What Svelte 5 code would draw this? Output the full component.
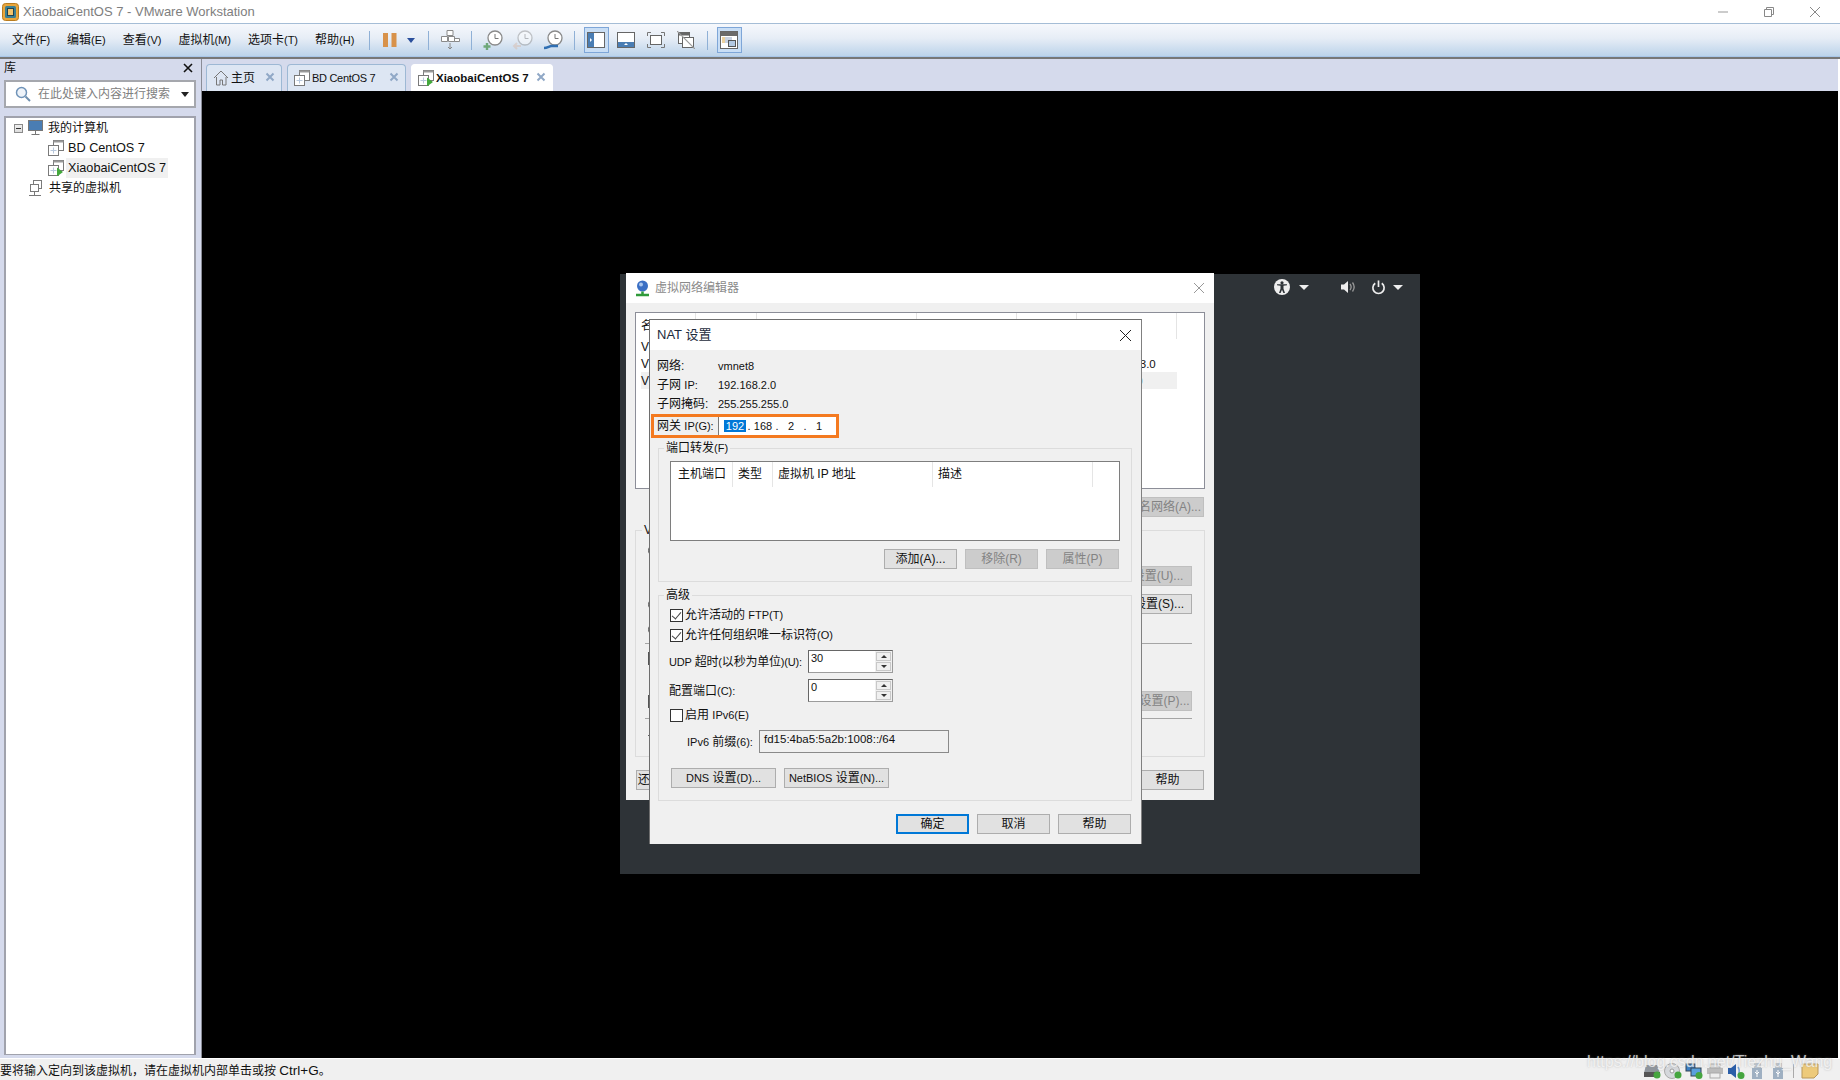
<script>
	const menus = [['文件', '(F)'], ['编辑', '(E)'], ['查看', '(V)'], ['虚拟机', '(M)'], ['选项卡', '(T)'], ['帮助', '(H)']];
	const columns = [
		{ label: '主机端口', width: 62 },
		{ label: '类型', width: 40 },
		{ label: '虚拟机 IP 地址', width: 160 },
		{ label: '描述', width: 160 }
	];
	const octets = ['192', '168', '2', '1'];
	const networks = [
		{ name: 'VMnet0', type: '桥接模式', subnet: '' },
		{ name: 'VMnet1', type: '仅主机', subnet: '192.168.3.0' },
		{ name: 'VMnet8', type: 'NAT 模式', subnet: '192.168.2.0' }
	];
</script>

{#snippet vmIcon(running)}
	<svg class="ico16" viewBox="0 0 16 16">
		<rect x="5.5" y="0.5" width="10" height="10" fill="#fff" stroke="#7a7a7a" />
		<rect x="5.5" y="0.5" width="10" height="2" fill="#9a9a9a" />
		<rect x="0.5" y="5.5" width="10" height="10" fill="#fff" stroke="#7a7a7a" />
		<path d="M5.5 7.5v6M2.5 10.5h6" stroke="#b8c8dc" fill="none" />
		{#if running}<path d="M9 7.5l6 4.5-6 4.5z" fill="#43a83c" />{/if}
	</svg>
{/snippet}

{#snippet clock(kind)}
	<svg class="ico22" viewBox="0 0 22 22" class:faded={kind === 'back'}>
		<circle cx="13" cy="9" r="7" fill="#fff" stroke="#8a8a8a" stroke-width="1.3" />
		<path d="M13 5v4.5h3.5" fill="none" stroke="#777" />
		{#if kind === 'add'}<path d="M5 14v7M1.5 17.5h7" stroke="#6fa87a" stroke-width="2.4" fill="none" />{/if}
		{#if kind === 'back'}<path d="M9 17H2m3-3l-3 3 3 3" stroke="#d9b9a6" stroke-width="2" fill="none" />{/if}
		{#if kind === 'tool'}<path d="M2 19c3 0 4-1 7-2h7" stroke="#2f6fb3" stroke-width="2.6" fill="none" />{/if}
	</svg>
{/snippet}

<div class="app">
	<header class="titlebar">
		<svg class="logo" viewBox="0 0 17 18">
			<rect x="0.5" y="0.5" width="16" height="17" rx="3" fill="#e9a63c" stroke="#b97c1f" />
			<rect x="3" y="3" width="11" height="12" rx="1.5" fill="#3b7f92" />
			<rect x="5.5" y="5.5" width="6" height="7" fill="#f3c36b" stroke="#20424f" />
		</svg>
		<span class="app-title">XiaobaiCentOS 7 - VMware Workstation</span>
		<div class="win-controls">
			<svg viewBox="0 0 12 12"><path d="M1 6h10" stroke="#999" stroke-width="1" /></svg>
			<svg viewBox="0 0 12 12"><path d="M1.5 3.5h7v7h-7zM3.5 3.5v-2h7v7h-2" fill="none" stroke="#888" /></svg>
			<svg viewBox="0 0 12 12"><path d="M1 1l10 10M11 1L1 11" stroke="#888" /></svg>
		</div>
	</header>

	<div class="toolbar">
		<nav class="menus">
			{#each menus as m}<span>{m[0]}<span class="lat">{m[1]}</span></span>{/each}
		</nav>
		<i class="sep"></i>
		<span class="slot pause"><svg viewBox="0 0 14 14" class="ico14"><path d="M0 0h5v14H0zM8.500 0h5v14h-5z" fill="#d8924a" /></svg></span>
		<span class="slot drop"><svg viewBox="0 0 8 5" class="ico8"><path d="M0 0h8L4 5z" fill="#2a4f9c" /></svg></span>
		<i class="sep"></i>
		<span class="slot">
			<svg class="ico22" viewBox="0 0 22 22"><path d="M8 1.500h6v5H8zM2.500 7.500h6v5h-6zM9.500 7.500h6v5h-6zM15.500 9.500h5v3h-5z" fill="#fff" stroke="#8a8a8a" /><path d="M11 14v6m-2-2l2 2 2-2" fill="none" stroke="#888" /></svg>
		</span>
		<i class="sep"></i>
		<span class="slot">{@render clock('add')}</span>
		<span class="slot">{@render clock('back')}</span>
		<span class="slot">{@render clock('tool')}</span>
		<i class="sep"></i>
		<span class="slot"><span class="on">
			<svg class="ico18" viewBox="0 0 18 16"><rect x="0.500" y="0.500" width="17" height="15" fill="#fff" stroke="#666" /><rect x="1" y="1" width="6" height="14" fill="#4a7db3" /><path d="M3 6l2 2-2 2z" fill="#fff" /></svg>
		</span></span>
		<span class="slot"><svg class="ico18" viewBox="0 0 18 16"><rect x="0.500" y="0.500" width="17" height="15" fill="#fff" stroke="#666" /><rect x="1" y="10" width="16" height="5" fill="#4a7db3" /><path d="M7 13l2-2 2 2z" fill="#fff" /></svg></span>
		<span class="slot"><svg class="ico18" viewBox="0 0 18 16"><rect x="3.500" y="3.500" width="11" height="9" fill="#fff" stroke="#666" /><path d="M0.500 4V0.500H4M14 0.500h3.500V4M0.500 12v3.500H4M14 15.500h3.500V12" fill="none" stroke="#777" /></svg></span>
		<span class="slot"><svg class="ico18" viewBox="0 0 18 18"><rect x="1.500" y="1.500" width="11" height="11" fill="#fff" stroke="#666" /><rect x="1.500" y="1.500" width="11" height="3" fill="#666" /><rect x="5.500" y="6.500" width="11" height="10" fill="#fff" stroke="#666" /><path d="M0 0l18 18" stroke="#999" stroke-width="1.200" /></svg></span>
		<i class="sep"></i>
		<span class="slot"><span class="on">
			<svg class="ico18" viewBox="0 0 18 18"><rect x="0.500" y="0.500" width="17" height="17" fill="#fff" stroke="#666" /><rect x="1" y="1" width="16" height="4" fill="#6a6a6a" /><rect x="5" y="6" width="7" height="6" fill="#c9d3e3" /><rect x="8.500" y="9.500" width="7" height="6" fill="#b3c9e2" stroke="#555" /><path d="M2 7h3M2 9h3M2 11h3" stroke="#d9a441" /></svg>
		</span></span>
	</div>

	<div class="main">
		<aside class="library">
			<div class="lib-head"><span>库</span><svg viewBox="0 0 10 10"><path d="M1 1l8 8M9 1L1 9" stroke="#111" stroke-width="1.600" /></svg></div>
			<div class="search">
				<svg viewBox="0 0 16 16"><circle cx="6.500" cy="6.500" r="5" fill="#eef3f9" stroke="#6f93b8" stroke-width="1.500" /><path d="M10.500 10.500l4.500 4.500" stroke="#6f8fae" stroke-width="2" /></svg>
				<span>在此处键入内容进行搜索</span>
				<i class="search-caret"></i>
			</div>
			<div class="tree">
				<div class="node">
					<span class="expander"></span>
					<svg class="ico16" viewBox="0 0 16 16"><rect x="0.500" y="0.500" width="14" height="10" fill="#4a7db3" stroke="#777" /><path d="M7.500 11v3M3.500 14.500h8" stroke="#777" fill="none" /></svg>
					<span>我的计算机</span>
				</div>
				<div class="node child">{@render vmIcon(false)}<span class="vm-name">BD CentOS 7</span></div>
				<div class="node child">{@render vmIcon(true)}<span class="vm-name current">XiaobaiCentOS 7</span></div>
				<div class="node shared">
					<svg class="ico16" viewBox="0 0 16 16"><rect x="4.500" y="0.500" width="8" height="8" fill="#fff" stroke="#7a7a7a" /><rect x="1.500" y="4.500" width="8" height="7" fill="#fff" stroke="#7a7a7a" /><path d="M5.500 12v3M0 15.500h12" stroke="#777" fill="none" /></svg>
					<span>共享的虚拟机</span>
				</div>
			</div>
		</aside>

		<section class="content">
			<div class="tabs">
				<div class="tab home">
					<svg class="ico16" viewBox="0 0 16 16"><path d="M1 8l7-7 7 7M3.500 7v8h3.500v-5h2.500v5H13V7" fill="none" stroke="#777" /></svg>
					<span>主页</span>
					<svg class="tab-x" viewBox="0 0 10 10"><path d="M1.500 1.500l7 7M8.500 1.500l-7 7" stroke="#90a8c6" stroke-width="2" /></svg>
				</div>
				<div class="tab bd">
					{@render vmIcon(false)}
					<span>BD CentOS 7</span>
					<svg class="tab-x" viewBox="0 0 10 10"><path d="M1.500 1.500l7 7M8.500 1.500l-7 7" stroke="#90a8c6" stroke-width="2" /></svg>
				</div>
				<div class="tab active">
					{@render vmIcon(true)}
					<span>XiaobaiCentOS 7</span>
					<svg class="tab-x" viewBox="0 0 10 10"><path d="M1.500 1.500l7 7M8.500 1.500l-7 7" stroke="#90a8c6" stroke-width="2" /></svg>
				</div>
			</div>

			<div class="vm-view">
				<div class="guest">
					<div class="guest-icons">
						<svg class="a11y" viewBox="0 0 16 16"><circle cx="8" cy="8" r="8" fill="#eee" /><circle cx="8" cy="3.800" r="1.600" fill="#2e3337" /><path d="M3 6.200l3.500.6v3L5 14h1.600L8 10.800 9.400 14H11L9.500 9.800v-3l3.500-.6v-1H3z" fill="#2e3337" /></svg>
						<i class="g-caret first"></i>
						<svg class="speaker" viewBox="0 0 16 14"><path d="M0 4.500h3L7 1v12L3 9.500H0z" fill="#eee" /><path d="M9 4c1.300 1.700 1.300 4.300 0 6M11.500 2.500c2 2.700 2 6.300 0 9" fill="none" stroke="#999" stroke-width="1.300" /></svg>
						<svg class="power" viewBox="0 0 16 16"><path d="M4.500 3.500a6 6 0 1 0 7 0" fill="none" stroke="#eee" stroke-width="1.800" /><path d="M8 0.500v7" stroke="#eee" stroke-width="1.800" /></svg>
						<i class="g-caret"></i>
					</div>

					<!-- 后面的虚拟网络编辑器窗口 -->
					<div class="dialog back">
						<div class="back-title">
							<svg viewBox="0 0 15 17"><circle cx="7.500" cy="6" r="5.500" fill="#3a6fc4" /><circle cx="6" cy="4.500" r="2" fill="#a9c6ee" /><path d="M7.500 11.500V14M1 15h13" stroke="#2f9a3a" stroke-width="2.500" /></svg>
							<span>虚拟网络编辑器</span>
							<svg class="back-x" viewBox="0 0 10 10"><path d="M0 0l10 10M10 0L0 10" stroke="#999" /></svg>
						</div>
						<div class="back-body">
							<div class="net-list">
								<div class="net-head">
									<span>名称</span><span>类型</span><span>外部连接</span><span>主机连接</span><span>DHCP</span><span>子网地址</span>
								</div>
								{#each networks as n, i}
									<div class="net-row" class:selected={i === 2}>
										<span>{n.name}</span><span>{n.type}</span><span></span><span></span><span></span><span>{n.subnet}</span>
									</div>
								{/each}
							</div>
							<div class="back-actions">
								<button class="btn off wide">重命名网络(A)...</button>
							</div>
							<fieldset class="net-info">
								<legend>VMnet 信息</legend>
								<div class="info-row"><i class="radio"></i>桥接模式</div>
								<div class="info-row end"><button class="btn off wide">自动设置(U)...</button></div>
								<div class="info-row"><i class="radio"></i><button class="btn wide push">NAT 设置(S)...</button></div>
								<div class="info-row"><i class="radio"></i>仅主机模式</div>
								<hr />
								<div class="info-row"><i class="square"></i>将主机虚拟适配器连接到此网络</div>
								<div class="info-row"></div>
								<div class="info-row"><i class="square"></i><button class="btn off wide push">DHCP 设置(P)...</button></div>
								<div class="rule-row"><hr /></div>
								<div class="info-row"><i class="dash"></i></div>
							</fieldset>
							<div class="back-foot">
								<button class="btn wide">还原默认设置(R)</button>
								<button class="btn">帮助</button>
							</div>
						</div>
					</div>

					<!-- NAT 设置 -->
					<div class="dialog nat">
						<div class="nat-title"><span>NAT 设置</span><svg viewBox="0 0 11 11"><path d="M0 0l11 11M11 0L0 11" stroke="#222" /></svg></div>
						<div class="nat-body">
							<dl class="facts">
								<dt>网络:</dt><dd>vmnet8</dd>
								<dt>子网 <span class="lat">IP:</span></dt><dd>192.168.2.0</dd>
								<dt>子网掩码:</dt><dd>255.255.255.0</dd>
							</dl>
							<div class="gateway">
								<span>网关 <span class="lat">IP(G):</span></span>
								<div class="ip">
									{#each octets as o, i}
										<span class="octet"><span class:sel={i === 0}>{o}</span></span>{#if i < 3}<span class="dot">.</span>{/if}
									{/each}
								</div>
							</div>

							<fieldset class="forward">
								<legend>端口转发<span class="lat">(F)</span></legend>
								<div class="ports">
									<div class="ports-head">
										{#each columns as c}
											<span class="col" style="width:{c.width}px">{c.label}</span>
										{/each}
									</div>
								</div>
								<div class="row-btns">
									<button class="btn">添加(A)...</button>
									<button class="btn off">移除(R)</button>
									<button class="btn off">属性(P)</button>
								</div>
							</fieldset>

							<fieldset class="advanced">
								<legend>高级</legend>
								<label class="check"><i class="box checked"></i><span>允许活动的 <span class="lat">FTP(T)</span></span></label>
								<label class="check"><i class="box checked"></i><span>允许任何组织唯一标识符<span class="lat">(O)</span></span></label>
								<div class="spin-row udp">
									<span><span class="lat">UDP</span> 超时<span class="lat">(</span>以秒为单位<span class="lat">)(U):</span></span>
									<div class="spin"><b>30</b><span class="arrows"><i class="up"></i><i class="down"></i></span></div>
								</div>
								<div class="spin-row port">
									<span>配置端口<span class="lat">(C):</span></span>
									<div class="spin"><b>0</b><span class="arrows"><i class="up"></i><i class="down"></i></span></div>
								</div>
								<label class="check v6"><i class="box"></i><span>启用 <span class="lat">IPv6(E)</span></span></label>
								<div class="prefix">
									<span><span class="lat">IPv6</span> 前缀<span class="lat">(6):</span></span>
									<div class="prefix-input">fd15:4ba5:5a2b:1008::/64</div>
								</div>
								<div class="svc-btns">
									<button class="btn svc"><span class="lat">DNS</span> 设置<span class="lat">(D)...</span></button>
									<button class="btn svc"><span class="lat">NetBIOS</span> 设置<span class="lat">(N)...</span></button>
								</div>
							</fieldset>

							<div class="foot">
								<button class="btn primary">确定</button>
								<button class="btn">取消</button>
								<button class="btn">帮助</button>
							</div>
						</div>
					</div>
				</div>
			</div>
		</section>
	</div>

	<footer class="statusbar">
		<span class="hint">要将输入定向到该虚拟机，请在虚拟机内部单击或按 <span class="ctrl">Ctrl+G</span>。</span>
		<div class="tray">
			<svg viewBox="0 0 18 16"><path d="M3 2h11l3 8v4H1v-4z" fill="#8f959c" /><rect x="1" y="9" width="16" height="5" fill="#555" /><circle cx="14" cy="12" r="3.500" fill="#45a53f" /></svg>
			<svg viewBox="0 0 18 16"><circle cx="8" cy="8" r="7.500" fill="#d5d8dc" stroke="#aaa" /><circle cx="8" cy="8" r="2" fill="#fff" stroke="#999" /><circle cx="14" cy="12" r="3.500" fill="#45a53f" /></svg>
			<svg viewBox="0 0 18 16"><rect x="1" y="1" width="9" height="7" fill="#3c7fc4" stroke="#345" /><rect x="6" y="5" width="10" height="8" fill="#5aa0dc" stroke="#345" /><circle cx="14" cy="12.500" r="3.500" fill="#45a53f" /></svg>
			<svg viewBox="0 0 18 16"><rect x="1" y="5" width="16" height="6" fill="#bbb" /><rect x="4" y="1" width="10" height="4" fill="#ddd" stroke="#aaa" /><rect x="4" y="10" width="10" height="5" fill="#eee" stroke="#aaa" /></svg>
			<svg viewBox="0 0 18 16"><path d="M1 5h3l5-4v14l-5-4H1z" fill="#2a5ea8" /><path d="M11 4c1.500 2.500 1.500 5.500 0 8" fill="none" stroke="#7aa5d6" stroke-width="1.500" /><circle cx="14" cy="12.500" r="3.500" fill="#45a53f" /></svg>
			<svg viewBox="0 0 18 16"><rect x="6" y="0" width="7" height="5" fill="#bcc4cc" /><rect x="4" y="5" width="10" height="11" fill="#9fb0c2" /><path d="M9 7v7M7 9l2 2 2-2" stroke="#fff" fill="none" /></svg>
			<svg viewBox="0 0 18 16"><rect x="6" y="0" width="7" height="5" fill="#bcc4cc" /><rect x="4" y="5" width="10" height="11" fill="#9fb0c2" /><path d="M9 7v7M7 9l2 2 2-2" stroke="#fff" fill="none" /></svg>
			<i class="tray-sep"></i>
			<svg viewBox="0 0 18 16"><path d="M1 1h16v10l-4 4H1z" fill="#edca7a" stroke="#b9985a" /></svg>
		</div>
		<span class="watermark">https://blog.csdn.net/Tiezhu_Wang</span>
	</footer>
</div>

<style>
	:global(body) {
		margin: 0;
		background: #f0f0f0;
	}
	.app {
		width: 1840px;
		height: 1080px;
		display: flex;
		flex-direction: column;
		overflow: hidden;
		font: 12px/16px 'Liberation Sans', 'Noto Sans CJK SC', sans-serif;
		color: #111;
	}
	i { display: block; font-style: normal; }
	.lat { font-size: 11px; }

	/* title bar */
	.titlebar {
		height: 23px;
		flex: none;
		display: flex;
		align-items: center;
		padding-left: 2px;
		background: #fff;
	}
	.logo { width: 17px; height: 18px; margin-right: 4px; }
	.app-title { font-size: 13px; color: #7e7e7e; }
	.win-controls {
		margin-left: auto;
		display: flex;
		gap: 34px;
		padding-right: 19px;
	}
	.win-controls svg { width: 12px; height: 12px; }

	/* toolbar */
	.toolbar {
		height: 34px;
		flex: none;
		box-sizing: border-box;
		display: flex;
		align-items: center;
		border-top: 1px solid #a5bdd6;
		border-bottom: 1px solid #a8c6e8;
		background: linear-gradient(#f6f8fc, #e6edf6 45%, #bcd3ea);
		box-shadow: 0 2px 0 #777;
		position: relative;
	}
	.menus {
		width: 351px;
		padding-left: 12px;
		display: flex;
		gap: 17px;
		white-space: nowrap;
	}
	.sep {
		width: 1px;
		height: 19px;
		margin: 0 6px;
		background: #8fb0d6;
	}
	.slot {
		width: 30px;
		height: 25px;
		display: flex;
		align-items: center;
		justify-content: center;
	}
	.pause { margin-left: -1px; }
	.drop { width: 12px; margin-right: 5px; }
	.on {
		width: 25px;
		height: 26px;
		box-sizing: border-box;
		display: flex;
		align-items: center;
		justify-content: center;
		border: 1px solid #7ea6d8;
		background: #c9def5;
	}
	.ico8 { width: 8px; height: 5px; }
	.ico14 { width: 14px; height: 14px; }
	.ico16 { width: 16px; height: 16px; flex: none; }
	.ico18 { width: 18px; height: 18px; }
	.ico22 { width: 22px; height: 22px; }
	.faded { opacity: 0.45; }

	/* main */
	.main {
		height: 999px;
		margin-top: 2px;
		flex: none;
		display: flex;
		background: #fff;
	}
	.library {
		flex: none;
		box-sizing: border-box;
		display: flex;
		flex-direction: column;
		padding: 0 5px 3px 4px;
		background: #d5daec;
		border-right: 1px solid #8a8c96;
		width: 202px;
	}
	.lib-head {
		height: 17px;
		flex: none;
		display: flex;
		align-items: center;
		justify-content: space-between;
		padding: 0 3px 4px 0;
	}
	.lib-head svg { width: 10px; height: 10px; }
	.search {
		height: 28px;
		flex: none;
		box-sizing: border-box;
		display: flex;
		align-items: center;
		gap: 7px;
		padding-left: 9px;
		background: #fff;
		border: 2px solid #a5a7ad;
		color: #808080;
	}
	.search svg { width: 16px; height: 16px; flex: none; }
	.search-caret {
		margin-left: auto;
		margin-right: 5px;
		border: 4px solid transparent;
		border-top: 5px solid #222;
		border-bottom: 0;
	}
	.tree {
		margin-top: 8px;
		flex: 1;
		box-sizing: border-box;
		background: #fff;
		border: 2px solid #a0a2ac;
		border-bottom-width: 1px;
	}
	.node {
		height: 20px;
		display: flex;
		align-items: center;
		gap: 4px;
		padding-left: 8px;
		white-space: nowrap;
	}
	.expander {
		width: 7px;
		height: 7px;
		border: 1px solid #8a8a8a;
		background: linear-gradient(#eee, #ddd);
		margin-right: 1px;
		position: relative;
	}
	.expander::after {
		content: '';
		position: absolute;
		left: 1px;
		right: 1px;
		top: 3px;
		height: 1px;
		background: #333;
	}
	.child { padding-left: 42px; }
	.vm-name { font-size: 12.7px; }
	.shared { padding-left: 23px; }
	.current {
		padding: 0 2px;
		margin-left: -2px;
		line-height: 20px;
		background: #f0f0f0;
	}

	/* tabs */
	.content {
		flex: 1;
		display: flex;
		flex-direction: column;
		padding-right: 2px;
		min-width: 0;
	}
	.tabs {
		height: 32px;
		flex: none;
		box-sizing: border-box;
		display: flex;
		align-items: flex-end;
		gap: 5px;
		padding-left: 4px;
		background: #d5daec;
	}
	.tab {
		height: 27px;
		box-sizing: border-box;
		display: flex;
		align-items: center;
		gap: 2px;
		padding: 0 6px;
		background: #dde6f3;
		border: 1px solid #9db8d4;
		border-bottom: 0;
		border-radius: 4px 4px 0 0;
		white-space: nowrap;
	}
	.tab.home { width: 76px; }
	.tab.bd { width: 119px; font-size: 11px; letter-spacing: -0.3px; }
	.tab.active { width: 142px; background: #fff; font-weight: bold; font-size: 11.5px; border-color: #fff; }
	.tab-x { width: 10px; height: 10px; margin-left: auto; margin-bottom: 2px; }

	/* vm */
	.vm-view {
		flex: 1;
		position: relative;
		background: #000;
	}
	.guest {
		position: absolute;
		left: 418px;
		top: 183px;
		width: 800px;
		height: 600px;
		background: #2e3337;
	}
	.guest-icons {
		position: absolute;
		left: 654px;
		top: 5px;
		height: 16px;
		display: flex;
		align-items: center;
	}
	.a11y { width: 16px; height: 16px; }
	.speaker { width: 16px; height: 14px; margin-left: 32px; }
	.power { width: 15px; height: 15px; margin-left: 14px; }
	.g-caret {
		margin-left: 7px;
		border: 5px solid transparent;
		border-top: 5px solid #eee;
		border-bottom: 0;
	}
	.g-caret.first { margin-left: 9px; }

	.dialog {
		position: absolute;
		box-sizing: border-box;
		background: #f0f0f0;
	}
	.btn {
		width: 73px;
		height: 20px;
		padding: 0;
		box-sizing: border-box;
		background: #e1e1e1;
		border: 1px solid #adadad;
		font: inherit;
		color: #111;
		white-space: nowrap;
	}
	.btn.off { background: #ccc; border-color: #bfbfbf; color: #838383; }
	.btn.wide { width: 92px; }
	.btn.primary { border: 2px solid #0078d7; }

	/* back dialog */
	.back {
		left: 6px;
		top: -1px;
		width: 588px;
		height: 527px;
	}
	.back-title {
		height: 30px;
		display: flex;
		align-items: center;
		gap: 5px;
		padding-left: 9px;
		background: #fff;
		color: #8a8a8a;
	}
	.back-title svg { width: 15px; height: 17px; }
	.back-title .back-x { width: 10px; height: 10px; margin-left: auto; margin-right: 10px; }
	.back-body { padding: 9px 9px 0; }
	.net-list {
		height: 177px;
		box-sizing: border-box;
		background: #fff;
		border: 1px solid #8c8e98;
		padding: 0 27px 0 5px;
		overflow: hidden;
	}
	.net-head, .net-row {
		display: grid;
		grid-template-columns: 55px 61px 160px 100px 60px 100px;
		align-items: center;
	}
	.net-head { height: 25px; margin-bottom: 0; }
	.net-head span { height: 100%; border-right: 1px solid #e4e4e4; line-height: 26px; }
	.net-row { height: 17px; }
	.net-row span:last-child { padding-left: 18px; font-size: 11.5px; white-space: nowrap; }
	.net-row.selected { background: #f0f0f0; }
	.net-row.selected span:last-child { padding-left: 5px; color: #6f8fc0; }
	.back-actions { display: flex; justify-content: flex-end; padding: 8px 1px 0 0; }
	.net-info {
		margin: 5px 0 0;
		padding: 3px 12px 0 9px;
		height: 235px;
		box-sizing: border-box;
		border: 1px solid #dcdcdc;
		display: grid;
		grid-template-rows: 18px 34px 22px 28px 1px 28px 16px 26px 8px 26px;
		align-items: center;
	}
	.net-info legend { padding: 0 2px; margin-left: -3px; }
	.net-info hr, .rule-row hr {
		width: 100%;
		margin: 0;
		border: 0;
		height: 1px;
		background: #a5a5a5;
	}
	.info-row { display: flex; align-items: center; gap: 4px; white-space: nowrap; }
	.info-row.end { justify-content: flex-end; }
	.push { margin-left: auto; }
	.radio { width: 11px; height: 11px; border: 1px solid #555; border-radius: 50%; margin-left: 3px; flex: none; }
	.square { width: 11px; height: 11px; border: 1px solid #555; margin-left: 3px; flex: none; }
	.dash { width: 10px; height: 1px; background: #666; margin-left: 3px; }
	.back-foot { display: flex; justify-content: space-between; margin: 13px 1px 0; }

	/* nat dialog */
	.nat {
		left: 29px;
		top: 45px;
		width: 493px;
		height: 525px;
		border: 1px solid #6e6e6e;
		border-bottom: 0;
		border-right-color: #808080;
	}
	.nat-title {
		height: 30px;
		display: flex;
		align-items: center;
		justify-content: space-between;
		padding: 0 10px 0 7px;
		background: #fff;
		font-size: 13px;
		color: #1c2b3c;
	}
	.nat-title svg { width: 11px; height: 11px; }
	.nat-body { padding-top: 6px; }
	.facts {
		margin: 0 0 1px 7px;
		display: grid;
		grid-template-columns: 61px auto;
		grid-auto-rows: 19px;
		align-items: center;
	}
	.facts dd { margin: 0; font-size: 11px; }
	.gateway {
		margin-left: 1px;
		width: 188px;
		height: 24px;
		box-sizing: border-box;
		display: flex;
		align-items: center;
		padding-left: 3px;
		border: 3px solid #f47a20;
		white-space: nowrap;
	}
	.gateway > span { width: 61px; flex: none; }
	.ip {
		flex: 1;
		height: 100%;
		display: flex;
		align-items: center;
		box-sizing: border-box;
		padding-left: 4px;
		background: #fff;
		border-left: 1px solid #7a7a7a;
		font-size: 11px;
	}
	.octet { width: 24px; text-align: center; }
	.dot { width: 4px; text-align: center; }
	.sel { background: #0078d7; color: #fff; padding: 0 2px; }

	fieldset {
		margin: 0;
		min-width: 0;
		box-sizing: border-box;
	}
	.forward, .advanced {
		width: 474px;
		margin-left: 8px;
		border: 1px solid #dcdcdc;
		padding: 0 11px;
	}
	legend { padding: 0 2px; margin-left: -6px; line-height: 16px; white-space: nowrap; }
	.forward { height: 142px; margin-top: 2px; padding-top: 5px; }
	.ports {
		height: 80px;
		box-sizing: border-box;
		background: #fff;
		border: 1px solid #7e7e7e;
	}
	.ports-head { height: 25px; display: flex; }
	.col {
		box-sizing: border-box;
		padding: 4px 0 0 7px;
		border-right: 1px solid #e5e5e5;
		white-space: nowrap;
	}
	.col:nth-child(2) { padding-left: 5px; }
	.col:nth-child(3) { padding-left: 5px; }
	.col:nth-child(4) { padding-left: 5px; }
	.row-btns { display: flex; justify-content: flex-end; gap: 8px; margin: 8px 1px 0 0; }

	.advanced { height: 214px; margin-top: 5px; padding-top: 2px; }
	.check { height: 20px; display: flex; align-items: center; gap: 2px; white-space: nowrap; }
	.box {
		width: 11px;
		height: 11px;
		flex: none;
		background: #fff;
		border: 1px solid #333;
		position: relative;
	}
	.box.checked::after {
		content: '';
		position: absolute;
		left: 3px;
		top: 0;
		width: 4px;
		height: 8px;
		border: solid #444;
		border-width: 0 1.5px 1.5px 0;
		transform: rotate(40deg);
	}
	.spin-row { display: flex; align-items: center; height: 23px; margin-top: 6px; white-space: nowrap; }
	.spin-row.udp { margin-top: 5px; }
	.spin-row > span { width: 139px; margin-left: -1px; flex: none; }
	.spin-row.udp > span { letter-spacing: -0.2px; }
	.spin {
		width: 85px;
		height: 23px;
		box-sizing: border-box;
		display: flex;
		background: #fff;
		border: 1px solid #9c9c9c;
		border-top-color: #666;
		border-left-color: #666;
	}
	.spin b { flex: 1; font-weight: normal; font-size: 11px; line-height: 15px; padding-left: 2px; }
	.arrows {
		width: 17px;
		display: flex;
		flex-direction: column;
		gap: 1px;
		box-sizing: border-box;
		padding: 1px;
		background: #f0f0f0;
	}
	.arrows i {
		flex: 1;
		background: #f0f0f0;
		border: 1px solid #c8c8c8;
		position: relative;
	}
	.arrows i::after {
		content: '';
		position: absolute;
		left: 4px;
		top: 2px;
		border: 3px solid transparent;
	}
	.arrows .up::after { border-bottom-color: #333; border-top: 0; }
	.arrows .down::after { border-top-color: #333; border-bottom: 0; }
	.v6 { height: 14px; margin-top: 6px; }
	.prefix { display: flex; align-items: center; height: 23px; margin: 8px 0 0 17px; white-space: nowrap; }
	.prefix > span { width: 72px; flex: none; }
	.prefix-input {
		width: 190px;
		height: 23px;
		box-sizing: border-box;
		padding-left: 4px;
		border: 1px solid #8a8a8a;
		font-size: 11.5px;
		line-height: 17px;
	}
	.svc-btns { display: flex; gap: 8px; margin: 15px 0 0 1px; }
	.btn.svc { width: 105px; }
	.foot { display: flex; justify-content: flex-end; gap: 8px; margin-top: 13px; padding-right: 10px; }

	/* status bar */
	.statusbar {
		height: 22px;
		flex: none;
		box-sizing: border-box;
		display: flex;
		align-items: center;
		background: #f0f0f0;
		border-top: 1px solid #fff;
		white-space: nowrap;
		position: relative;
	}
	.hint { margin-top: 2px; }
	.ctrl { font-size: 13.5px; }
	.tray {
		margin-left: auto;
		margin-top: 3px;
		display: flex;
		align-items: center;
		gap: 3px;
		padding-right: 21px;
	}
	.tray svg { width: 18px; height: 16px; }
	.tray-sep { width: 1px; height: 14px; margin: 0 4px 0 3px; background: #aaa; }
	.watermark {
		position: absolute;
		left: 1587px;
		top: -8px;
		font-size: 16px;
		line-height: 22px;
		color: rgba(255, 255, 255, 0.7);
		text-shadow: 0 0 2px rgba(150, 150, 150, 0.6);
	}
</style>
